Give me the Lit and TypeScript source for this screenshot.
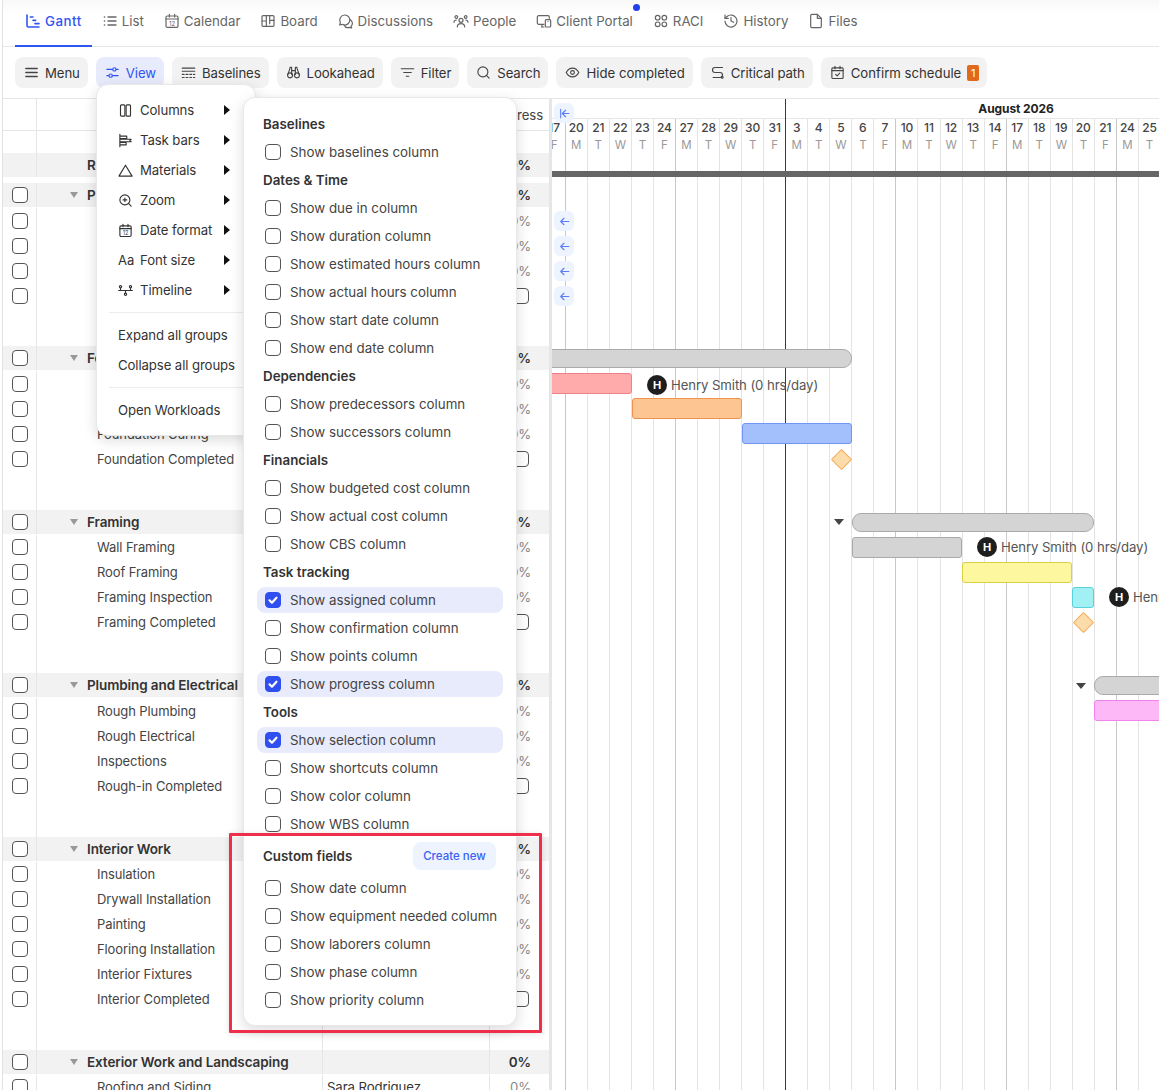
import { LitElement, html, css, svg } from 'lit';
import { customElement } from 'lit/decorators.js';

const icon = (body: unknown, size = 16) => html`<svg class="ic" width=${size} height=${size} viewBox="0 0 24 24" fill="none" stroke="currentColor" stroke-width="1.8" stroke-linecap="round" stroke-linejoin="round">${body}</svg>`;

const calendar12 = svg`<rect x="3" y="4.5" width="18" height="17" rx="2"/><path d="M3 9h18M8 2v4M16 2v4"/><text x="12" y="19" font-size="9" text-anchor="middle" fill="currentColor" stroke="none" font-family="Inter, sans-serif">12</text>`;

const icons: Record<string, unknown> = {
  gantt: svg`<path stroke-width="2.4" d="M3 3v16a2 2 0 0 0 2 2h16M8 6h4M12 11h4M15 16h6"/>`,
  list: svg`<path d="M9 6h12M9 12h12M9 18h12M3.5 6h.5M3.5 12h.5M3.5 18h.5" stroke-width="2"/>`,
  calendar: calendar12,
  board: svg`<rect x="3" y="4" width="18" height="16" rx="1.5"/><path d="M9.5 4v16M14.5 4v12M3 12h6.5M14.5 11H21"/>`,
  discussions: svg`<path d="M10 3a7.5 7.5 0 0 0-6.5 11L2.5 18l4-1A7.5 7.5 0 1 0 10 3z"/><path d="M18 10a6 6 0 0 1 1.5 10l1 2.500-3.500-1A6.500 6.500 0 0 1 9 18"/>`,
  people: svg`<circle cx="12" cy="11" r="3"/><path d="M6.500 21c0-3.500 2-5 5.500-5s5.500 1.500 5.500 5"/><circle cx="5" cy="6" r="2"/><circle cx="19" cy="6" r="2"/><path d="M1.500 14c0-2 1-3.500 3.500-3.500M22.500 14c0-2-1-3.500-3.500-3.500"/>`,
  portal: svg`<path d="M12 17H4a2 2 0 0 1-2-2V6a2 2 0 0 1 2-2h14a2 2 0 0 1 2 2v2M8 21h4M9 17v4"/><rect x="14" y="10" width="8" height="11" rx="1.500"/><path d="M18 13h.01"/>`,
  raci: svg`<circle cx="7" cy="7" r="3.500"/><circle cx="17" cy="7" r="3.500"/><circle cx="7" cy="17" r="3.500"/><circle cx="17" cy="17" r="3.500"/>`,
  history: svg`<path d="M3 12a9 9 0 1 0 3-6.700L3 8"/><path d="M3 3v5h5M12 7v5l4 2"/>`,
  files: svg`<path d="M14 2H6a2 2 0 0 0-2 2v16a2 2 0 0 0 2 2h12a2 2 0 0 0 2-2V8z"/><path d="M14 2v6h6"/>`,
  menu: svg`<path stroke-width="2.400" d="M3 5.500h18M3 12h18M3 18.500h18"/>`,
  view: svg`<path d="M3 7h9M18 7h3M3 17h3M12 17h9"/><circle cx="15" cy="7" r="2.600"/><circle cx="9" cy="17" r="2.600"/>`,
  baselines: svg`<path d="M2 5h20M2 10h20M2 15h3M8 15h3M14 15h3M20 15h2M2 20h3M8 20h3M14 20h3M20 20h2"/>`,
  lookahead: svg`<path d="M9 5V3.500H6.500V5L3 15M15 5V3.500h2.500V5L21 15M9 5v10M15 5v10M9 9h6"/><circle cx="6.500" cy="16.500" r="4"/><circle cx="17.500" cy="16.500" r="4"/>`,
  filter: svg`<path d="M2 6h20M6 12h12M10 18h4"/>`,
  search: svg`<circle cx="11" cy="11" r="8"/><path d="M21 21l-4.300-4.300"/>`,
  eye: svg`<path d="M2 12s3.500-7 10-7 10 7 10 7-3.500 7-10 7-10-7-10-7z"/><circle cx="12" cy="12" r="3"/>`,
  critical: svg`<path d="M20 4H8a4 4 0 0 0 0 8h8a4 4 0 0 1 0 8H5"/><circle cx="19.500" cy="19.500" r="1.500"/>`,
  confirm: svg`<rect x="3" y="4.500" width="18" height="17" rx="1.500"/><path d="M3 9h18M8 2v4M16 2v4M9 15l2.500 2.500L15.500 13"/>`,
  columns: svg`<rect x="4" y="3" width="7" height="18" rx="1.500"/><rect x="13" y="3" width="7" height="18" rx="1.500"/>`,
  taskbars: svg`<path d="M3 2v20M3 5h11v4H3M3 10h18l-2 2 2 2H3M3 15h10v4H3"/>`,
  materials: svg`<path d="M12 3.500L1.500 21h21z"/>`,
  zoom: svg`<circle cx="11" cy="11" r="8"/><path d="M21 21l-4.300-4.300M11 8v6M8 11h6"/>`,
  date: calendar12,
  timeline: svg`<circle cx="4" cy="6" r="1.800"/><circle cx="20" cy="6" r="1.800"/><circle cx="12" cy="18" r="1.800"/><path d="M1 12h22M4 8v4M20 8v4M12 12v4"/>`,
};

const NAV = [
  ['gantt', 'Gantt'], ['list', 'List'], ['calendar', 'Calendar'], ['board', 'Board'], ['discussions', 'Discussions'],
  ['people', 'People'], ['portal', 'Client Portal'], ['raci', 'RACI'], ['history', 'History'], ['files', 'Files'],
];

const TOOLS = [
  ['menu', 'Menu'], ['view', 'View'], ['baselines', 'Baselines'], ['lookahead', 'Lookahead'], ['filter', 'Filter'],
  ['search', 'Search'], ['eye', 'Hide completed'], ['critical', 'Critical path'], ['confirm', 'Confirm schedule'],
];

const MENU = [
  ['columns', 'Columns'], ['taskbars', 'Task bars'], ['materials', 'Materials'], ['zoom', 'Zoom'],
  ['date', 'Date format'], ['font', 'Font size'], ['timeline', 'Timeline'],
];

const GROUPS = [
  ['Pre-Construction', 'Site Survey', 'Permits', 'Site Preparation', 'Pre-Construction Completed'],
  ['Foundation', 'Excavation', 'Footings', 'Foundation Curing', 'Foundation Completed'],
  ['Framing', 'Wall Framing', 'Roof Framing', 'Framing Inspection', 'Framing Completed'],
  ['Plumbing and Electrical', 'Rough Plumbing', 'Rough Electrical', 'Inspections', 'Rough-in Completed'],
  ['Interior Work', 'Insulation', 'Drywall Installation', 'Painting', 'Flooring Installation', 'Interior Fixtures', 'Interior Completed'],
  ['Exterior Work and Landscaping', 'Roofing and Siding'],
];

const SECTIONS: [string, [string, boolean?][]][] = [
  ['Baselines', [['baselines']]],
  ['Dates & Time', [['due in'], ['duration'], ['estimated hours'], ['actual hours'], ['start date'], ['end date']]],
  ['Dependencies', [['predecessors'], ['successors']]],
  ['Financials', [['budgeted cost'], ['actual cost'], ['CBS']]],
  ['Task tracking', [['assigned', true], ['confirmation'], ['points'], ['progress', true]]],
  ['Tools', [['selection', true], ['shortcuts'], ['color'], ['WBS']]],
];

const CUSTOM = ['date', 'equipment needed', 'laborers', 'phase', 'priority'];

// weekdays shown on the timeline, first one is cut by the splitter
const DAYS = [
  17, 20, 21, 22, 23, 24, 27, 28, 29, 30, 31, 3, 4, 5, 6, 7, 10, 11, 12, 13, 14, 17, 18, 19, 20, 21, 24, 25, 26,
];
const LETTERS = ['M', 'T', 'W', 'T', 'F'];

// bars use page coordinates, converted to the timeline canvas when drawn
const BARS = [
  { x: 500, y: 349, w: 352, h: 19, kind: 'group', bg: '#d4d4d4', bd: '#aaaaaa' },
  { x: 500, y: 373, w: 132, h: 21, kind: '', bg: '#ffabab', bd: '#f08088' },
  { x: 632, y: 398, w: 110, h: 21, kind: '', bg: '#fdc591', bd: '#f0924c' },
  { x: 742, y: 423, w: 110, h: 21, kind: '', bg: '#a4c0fc', bd: '#7095f5' },
  { x: 852, y: 513, w: 242, h: 19, kind: 'group', bg: '#d4d4d4', bd: '#aaaaaa' },
  { x: 852, y: 537, w: 110, h: 21, kind: '', bg: '#d4d4d4', bd: '#aaaaaa' },
  { x: 962, y: 562, w: 110, h: 21, kind: '', bg: '#fdf8a0', bd: '#dccf48' },
  { x: 1072, y: 587, w: 22, h: 21, kind: '', bg: '#a0f0f4', bd: '#58d2da' },
  { x: 1094, y: 676, w: 120, h: 19, kind: 'group', bg: '#d4d4d4', bd: '#aaaaaa' },
  { x: 1094, y: 700, w: 120, h: 21, kind: '', bg: '#fdb8f8', bd: '#f084e8' },
];
const DIAMONDS = [[841, 459], [1083, 622]];
const CARETS = [[839, 522], [1081, 686]];
const OWNERS = [[657, 385], [987, 547], [1119, 597]];
const BACK_ROWS = [221, 246, 271, 296];

const OX = 552;
const OY = 99;

@customElement('app-root')
export class AppRoot extends LitElement {
  static styles = css`
    :host {
      display: block;
      height: 1090px;
      font-family: Inter, 'Noto Sans', sans-serif;
      font-size: 13.2px;
      letter-spacing: -0.1px;
      color: #333;
    }
    .page {
      position: relative;
      height: 1090px;
      overflow: hidden;
      background: #fff;
      margin-left: 2px;
      border-left: 1px solid #e2e2e2;
      display: flex;
      flex-direction: column;
    }
    .ic {
      flex: none;
      display: block;
    }
    .nav {
      flex: none;
      height: 46px;
      border-bottom: 1px solid #e6e6e6;
      display: flex;
      padding-left: 12px;
      background: linear-gradient(#f8f8f8, #fff 14px);
    }
    .nav-item {
      display: flex;
      align-items: center;
      gap: 4px;
      padding: 0 10px 6px;
      height: 47px;
      box-sizing: border-box;
      color: #666;
      font-size: 13.3px;
      letter-spacing: 0;
      position: relative;
    }
    .nav-item.on {
      color: #2f55f0;
      font-weight: 500;
      letter-spacing: 0.5px;
      border-bottom: 2px solid #2f55f0;
      padding-bottom: 4px;
    }
    .dot {
      position: absolute;
      top: 3.5px;
      right: 3px;
      width: 7px;
      height: 7px;
      border-radius: 50%;
      background: #2140e8;
    }
    .toolbar {
      flex: none;
      height: 51px;
      border-bottom: 1px solid #e6e6e6;
      display: flex;
      align-items: center;
      gap: 8px;
      padding-left: 12px;
    }
    .tool {
      height: 31px;
      display: flex;
      align-items: center;
      gap: 6px;
      padding: 0 8px 0 9px;
      border-radius: 8px;
      background: #f2f2f2;
      color: #333;
    }
    .tool .ic {
      color: #444;
      width: 15px;
      height: 15px;
    }
    .tool.wide {
      letter-spacing: 0;
    }
    .tool.on {
      background: #e8ebfc;
      color: #2f55f0;
    }
    .tool.on .ic {
      color: #2f55f0;
    }
    .badge {
      width: 12px;
      height: 16px;
      border-radius: 2px;
      background: #e0691c;
      color: #fff;
      font-size: 11px;
      line-height: 16px;
      text-align: center;
    }
    .main {
      flex: 1;
      min-height: 0;
      display: flex;
    }
    .table {
      flex: none;
      width: 546px;
      overflow: hidden;
    }
    .splitter {
      flex: none;
      width: 3px;
      background: #e6e6e6;
    }
    .row {
      display: grid;
      grid-template-columns: 33px 286px 167px 60px;
      height: 25px;
      align-items: stretch;
    }
    .cell {
      display: flex;
      align-items: center;
      min-width: 0;
      white-space: nowrap;
      border-left: 1px solid #e6e6e6;
    }
    .cell:first-child {
      border-left: none;
      padding-left: 9px;
    }
    .cell.pct {
      justify-content: flex-end;
      padding-right: 18px;
      color: #888;
    }
    .head {
      height: 31px;
      border-bottom: 1px solid #e6e6e6;
    }
    .head .pct {
      padding-right: 6px;
      color: #444;
    }
    .group {
      height: 24px;
      margin-bottom: 1px;
      background: #f2f2f2;
      font-size: 13.5px;
      font-weight: 600;
    }
    .group .pct {
      color: #333;
    }
    .summary {
      margin-bottom: 6px;
    }
    .name {
      padding-left: 60px;
      color: #444;
      font-size: 13px;
    }
    .gname {
      display: flex;
      align-items: center;
      padding-left: 33px;
      gap: 9px;
    }
    .tri {
      width: 0;
      height: 0;
      border-left: 4px solid transparent;
      border-right: 4px solid transparent;
      border-top: 6px solid #999;
    }
    .gap-22 {
      height: 22px;
    }
    .gap-38 {
      height: 38.4px;
    }
    .box {
      flex: none;
      box-sizing: border-box;
      width: 16px;
      height: 16px;
      border: 1.2px solid #555;
      border-radius: 4px;
      background: #fff;
      display: flex;
      align-items: center;
      justify-content: center;
    }
    .box.on {
      background: #2f4ff0;
      border-color: #2f4ff0;
    }
    .pct .box {
      margin-right: 2px;
    }
    .timeline {
      flex: 1;
      min-width: 0;
      position: relative;
      overflow: hidden;
    }
    .month {
      height: 20px;
      box-sizing: border-box;
      padding-left: 233.7px;
      border-bottom: 1px solid #e6e6e6;
    }
    .month span {
      display: block;
      width: 460.6px;
      text-align: center;
      font-size: 12px;
      font-weight: 700;
      line-height: 20px;
      color: #222;
    }
    .days {
      height: 971px;
      display: flex;
      margin-left: -8.35px;
    }
    .day {
      flex: none;
      width: 22.05px;
      box-sizing: border-box;
      border-right: 1px solid #e4e4e4;
      text-align: center;
      font-size: 12px;
      font-weight: 500;
      color: #444;
      padding-top: 1px;
    }
    .day.fri {
      border-right-color: #c8c8c8;
    }
    .day div {
      line-height: 15px;
    }
    .day .letter {
      margin-top: 3px;
      font-size: 11.5px;
      font-weight: 400;
      color: #999;
    }
    .today {
      position: absolute;
      left: 233px;
      top: 0;
      bottom: 0;
      width: 1px;
      background: #3a3a3a;
    }
    .rollup {
      position: absolute;
      left: 0;
      right: 0;
      top: 72px;
      height: 6px;
      background: #666;
    }
    .bar {
      position: absolute;
      box-sizing: border-box;
      border: 1px solid;
      border-radius: 3px;
    }
    .bar.group-bar {
      border-radius: 9px;
      border-width: 1.5px;
    }
    .diamond {
      position: absolute;
      width: 15px;
      height: 15px;
      box-sizing: border-box;
      background: #fddcab;
      border: 1.2px solid #f5ac5a;
      transform: rotate(45deg);
      border-radius: 1px;
    }
    .caret {
      position: absolute;
      width: 0;
      height: 0;
      border-left: 5.5px solid transparent;
      border-right: 5.5px solid transparent;
      border-top: 6px solid #444;
    }
    .owner {
      position: absolute;
      display: flex;
      align-items: center;
      gap: 4px;
      white-space: nowrap;
      color: #555;
    }
    .avatar {
      width: 20px;
      height: 20px;
      border-radius: 50%;
      background: #1e1e1e;
      color: #fff;
      font-size: 11px;
      font-weight: 700;
      line-height: 20px;
      text-align: center;
    }
    .back {
      position: absolute;
      left: 2px;
      width: 20px;
      height: 20px;
      border-radius: 6px;
      background: #edf3ff;
      color: #5b7cf5;
      display: flex;
      align-items: center;
      justify-content: center;
    }
    .menu {
      position: absolute;
      box-sizing: border-box;
      background: #fff;
      border: 1px solid #e8e8e8;
      border-radius: 12px;
      box-shadow: 0 4px 14px rgba(0, 0, 0, 0.14);
    }
    .views {
      left: 93px;
      top: 84px;
      width: 160px;
      height: 352px;
      padding: 10px 0;
    }
    .mi {
      height: 30px;
      display: flex;
      align-items: center;
      padding: 0 25px 0 21px;
      gap: 7px;
      color: #333;
      white-space: nowrap;
    }
    .mi .ic {
      width: 15px;
      height: 15px;
    }
    .mi .aa {
      width: 15px;
      flex: none;
      font-size: 13px;
      letter-spacing: 0;
      white-space: nowrap;
    }
    .mi .arrow {
      margin-left: auto;
      width: 0;
      height: 0;
      border-top: 5px solid transparent;
      border-bottom: 5px solid transparent;
      border-left: 6px solid #111;
    }
    .rule {
      height: 1px;
      margin: 7px 0 7px 12px;
      background: #ececec;
    }
    .columns {
      left: 240px;
      top: 97px;
      width: 274px;
      height: 929px;
      padding: 12px 13px 0 13px;
      display: flex;
      flex-direction: column;
      font-size: 13.35px;
      letter-spacing: 0;
    }
    .sec {
      flex: none;
      height: 28px;
      line-height: 28px;
      padding-left: 6px;
      font-weight: 600;
      color: #333;
    }
    .chk {
      flex: none;
      height: 26px;
      margin: 1px 0;
      display: flex;
      align-items: center;
      gap: 9px;
      padding-left: 8px;
      border-radius: 8px;
      color: #444;
      white-space: nowrap;
    }
    .chk.on {
      background: #e8ebfc;
    }
    .custom {
      flex: none;
      height: 28px;
      margin: 4px 0;
      display: flex;
      align-items: center;
      justify-content: space-between;
      padding: 0 7px 0 6px;
      font-weight: 600;
      color: #333;
    }
    .create {
      width: 83px;
      height: 28px;
      border-radius: 8px;
      background: #edf3ff;
      color: #3b5ff0;
      font-size: 11.5px;
      font-weight: 500;
      line-height: 28px;
      text-align: center;
    }
    .callout {
      position: absolute;
      left: 226px;
      top: 832.5px;
      width: 313px;
      height: 200.5px;
      box-sizing: border-box;
      border: 3px solid #ef2f4a;
      border-radius: 1px;
      box-shadow: 0 1px 6px rgba(0, 0, 0, 0.12);
    }
  `;

  private box(on = false) {
    return html`<span class="box ${on ? 'on' : ''}">${on
      ? html`<svg width="12" height="12" viewBox="0 0 12 12" fill="none" stroke="#fff" stroke-width="2.200" stroke-linecap="round" stroke-linejoin="round"><path d="M2.500 6.300l2.400 2.400 4.600-5"/></svg>`
      : ''}</span>`;
  }

  private taskRow(name: string, last: boolean, owner = '') {
    return html`<div class="row">
      <div class="cell">${this.box()}</div>
      <div class="cell"><span class="name">${name}</span></div>
      <div class="cell" style="padding-left:4px">${owner}</div>
      <div class="cell pct">${last ? this.box() : '0%'}</div>
    </div>`;
  }

  private groupRow(name: string, cls = '') {
    return html`<div class="row group ${cls}">
      <div class="cell">${this.box()}</div>
      <div class="cell"><span class="gname"><span class="tri"></span>${name}</span></div>
      <div class="cell"></div>
      <div class="cell pct">0%</div>
    </div>`;
  }

  private blank(cls: string) {
    return html`<div class="row ${cls}"><div class="cell"></div><div class="cell"></div><div class="cell"></div><div class="cell"></div></div>`;
  }

  private renderTable() {
    return html`<div class="table">
      <div class="row head">
        <div class="cell"></div><div class="cell"></div><div class="cell"></div>
        <div class="cell pct">Progress</div>
      </div>
      ${this.blank('gap-22')}
      <div class="row group summary">
        <div class="cell"></div>
        <div class="cell"><span class="gname" style="padding-left:50px">Residential Build</span></div>
        <div class="cell"></div>
        <div class="cell pct">0%</div>
      </div>
      ${GROUPS.map(([title, ...tasks], g) => html`
        ${this.groupRow(title)}
        ${tasks.map((t, i) => this.taskRow(t, g < 5 && i === tasks.length - 1, g === 5 ? 'Sara Rodriguez' : ''))}
        ${g < 5 ? this.blank('gap-38') : ''}
      `)}
    </div>`;
  }

  private renderTimeline() {
    return html`<div class="timeline">
      <div class="month"><span>August 2026</span></div>
      <div class="days">
        ${DAYS.map((d, i) => {
          const wd = (i + 4) % 5;
          return html`<div class="day ${wd === 4 ? 'fri' : ''}"><div>${d}</div><div class="letter">${LETTERS[wd]}</div></div>`;
        })}
      </div>
      <div class="today"></div>
      <div class="rollup"></div>
      ${BARS.map((b) => html`<div class="bar ${b.kind === 'group' ? 'group-bar' : ''}"
        style="left:${b.x - OX}px;top:${b.y - OY}px;width:${b.w}px;height:${b.h}px;background:${b.bg};border-color:${b.bd}"></div>`)}
      ${DIAMONDS.map(([x, y]) => html`<div class="diamond" style="left:${x - OX - 7.5}px;top:${y - OY - 7.5}px"></div>`)}
      ${CARETS.map(([x, y]) => html`<div class="caret" style="left:${x - OX - 5.5}px;top:${y - OY - 3}px"></div>`)}
      ${OWNERS.map(([x, y]) => html`<div class="owner" style="left:${x - OX - 10}px;top:${y - OY - 10}px"><span class="avatar">H</span>Henry Smith (0 hrs/day)</div>`)}
      <div class="back" style="top:4px">
        ${icon(svg`<path d="M5 4v16M20 12H9M14 6l-6 6 6 6" stroke-width="2"/>`, 13)}
      </div>
      ${BACK_ROWS.map((y) => html`<div class="back" style="top:${y - OY - 10}px">
        ${icon(svg`<path d="M20 12H5M11 6l-6 6 6 6" stroke-width="2"/>`, 13)}
      </div>`)}
    </div>`;
  }

  private renderViewMenu() {
    return html`<div class="menu views">
      ${MENU.map(([k, label]) => html`<div class="mi">
        ${k === 'font' ? html`<span class="aa">Aa</span>` : icon(icons[k])}
        <span>${label}</span><span class="arrow"></span>
      </div>`)}
      <div class="rule"></div>
      <div class="mi">Expand all groups</div>
      <div class="mi">Collapse all groups</div>
      <div class="rule"></div>
      <div class="mi">Open Workloads</div>
    </div>`;
  }

  private renderColumnsMenu() {
    return html`<div class="menu columns">
      ${SECTIONS.map(([title, items]) => html`
        <div class="sec">${title}</div>
        ${items.map(([n, on]) => html`<div class="chk ${on ? 'on' : ''}">${this.box(!!on)}Show ${n} column</div>`)}
      `)}
      <div class="custom"><span>Custom fields</span><span class="create">Create new</span></div>
      ${CUSTOM.map((n) => html`<div class="chk">${this.box()}Show ${n} column</div>`)}
    </div>`;
  }

  render() {
    return html`<div class="page">
      <div class="nav">
        ${NAV.map(([k, label], i) => html`<div class="nav-item ${i === 0 ? 'on' : ''}">
          ${icon(icons[k])}<span>${label}</span>
          ${k === 'portal' ? html`<span class="dot"></span>` : ''}
        </div>`)}
      </div>
      <div class="toolbar">
        ${TOOLS.map(([k, label]) => html`<div class="tool ${k === 'view' ? 'on' : ''} ${k === 'eye' || k === 'confirm' ? 'wide' : ''}">
          ${icon(icons[k])}<span>${label}</span>
          ${k === 'confirm' ? html`<span class="badge">1</span>` : ''}
        </div>`)}
      </div>
      <div class="main">
        ${this.renderTable()}
        <div class="splitter"></div>
        ${this.renderTimeline()}
      </div>
      ${this.renderViewMenu()}
      ${this.renderColumnsMenu()}
      <div class="callout"></div>
    </div>`;
  }
}
